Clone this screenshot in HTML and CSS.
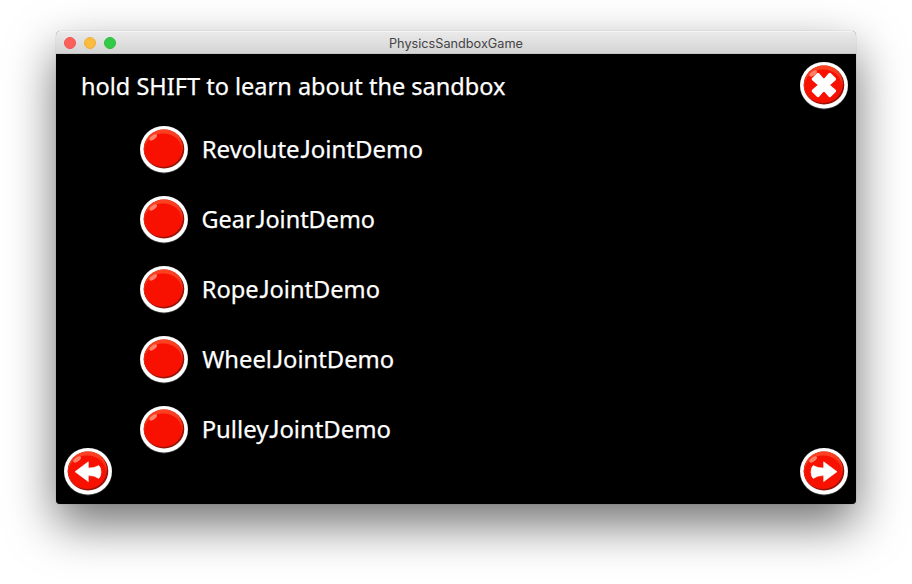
FILE: index.html
```
<!DOCTYPE html>
<html lang="en">
<head>
<meta charset="utf-8">
<title>PhysicsSandboxGame</title>
<link rel="stylesheet" href="styles.css">
</head>
<body>
<svg class="defs" aria-hidden="true">
  <defs>
    <linearGradient id="gloss" x1="0" y1="0" x2="0" y2="1">
      <stop offset="0" stop-color="#ff4524"/>
      <stop offset="1" stop-color="#d81c0c"/>
    </linearGradient>
    <clipPath id="face"><ellipse cx="24" cy="23" rx="20.3" ry="19.6"/></clipPath>
    <symbol id="button" viewBox="0 0 48 48">
      <ellipse cx="24" cy="23.6" rx="24.2" ry="23.8" fill="#8b8b8b" opacity=".5"/>
      <ellipse cx="24" cy="23.3" rx="23.9" ry="23.3" fill="#fff"/>
      <g clip-path="url(#face)">
        <rect width="48" height="48" fill="#9c1008"/>
        <ellipse cx="22.8" cy="21.6" rx="20" ry="19.5" fill="url(#gloss)"/>
        <ellipse cx="23.2" cy="24" rx="18.6" ry="16.6" fill="#f81000"/>
        <ellipse cx="13.2" cy="11.5" rx="4.4" ry="2" transform="rotate(-34 13.2 11.5)" fill="#ff8068"/>
      </g>
    </symbol>
    <path id="arrow" d="M11 23.7 24.3 13.8V20Q30 20.5 34.7 17.6Q36.8 19 37 24Q36.8 28.8 34.7 30.4Q30 27 24.3 27.6V33.6Z" stroke="#fff" stroke-width=".6" stroke-linejoin="round"/>
  </defs>
</svg>
<main class="window">
  <header class="titlebar">
    <div class="lights"><i class="red"></i><i class="yellow"></i><i class="green"></i></div>
    <svg class="title" width="136" height="22"><text x="1" y="16.3" textLength="134" lengthAdjust="spacingAndGlyphs">PhysicsSandboxGame</text></svg>
  </header>
  <section class="game">
    <div class="top">
      <svg class="label hint" width="430" height="48"><text x="0" y="32.6" textLength="424.5" lengthAdjust="spacingAndGlyphs">hold SHIFT to learn about the sandbox</text></svg>
      <svg class="btn" viewBox="0 0 48 48">
        <use href="#button"/>
        <g fill="#fff" stroke="#fff" stroke-width="3" stroke-linejoin="round" transform="translate(23.9 23) rotate(45)">
          <path d="M-3.4-11.8H3.4L2.9-2.9 11.8-3.4V3.4L2.9 2.9 3.4 11.8H-3.4L-2.9 2.9-11.8 3.4V-3.4L-2.9-2.9Z"/>
        </g>
      </svg>
    </div>
    <ul class="demos">
      <li><svg class="btn"><use href="#button"/></svg><svg class="label" width="240" height="48"><text x="0.7" y="31.8" textLength="221.3" lengthAdjust="spacingAndGlyphs">Revolute<tspan class="cap-j" dx="1">J</tspan>ointDemo</text></svg></li>
      <li><svg class="btn"><use href="#button"/></svg><svg class="label" width="240" height="48"><text x="0.5" y="31.8" textLength="173.5" lengthAdjust="spacingAndGlyphs">Gear<tspan class="cap-j" dx="1">J</tspan>ointDemo</text></svg></li>
      <li><svg class="btn"><use href="#button"/></svg><svg class="label" width="240" height="48"><text x="0.7" y="31.8" textLength="178.3" lengthAdjust="spacingAndGlyphs">Rope<tspan class="cap-j" dx="1">J</tspan>ointDemo</text></svg></li>
      <li><svg class="btn"><use href="#button"/></svg><svg class="label" width="240" height="48"><text x="1.2" y="31.8" textLength="192" lengthAdjust="spacingAndGlyphs">Wheel<tspan class="cap-j" dx="1">J</tspan>ointDemo</text></svg></li>
      <li><svg class="btn"><use href="#button"/></svg><svg class="label" width="240" height="48"><text x="0.7" y="31.8" textLength="189.3" lengthAdjust="spacingAndGlyphs">Pulley<tspan class="cap-j" dx="1">J</tspan>ointDemo</text></svg></li>
    </ul>
    <nav class="pager">
      <svg class="btn" viewBox="0 0 48 48"><use href="#button"/><use href="#arrow" fill="#fff"/></svg>
      <svg class="btn" viewBox="0 0 48 48"><use href="#button"/><use href="#arrow" fill="#fff" transform="matrix(-1 0 0 1 48 0)"/></svg>
    </nav>
  </section>
</main>
</body>
</html>
```
FILE: styles.css
```
* { box-sizing: border-box; }
body {
  margin: 0;
  height: 584px;
  padding: 31px 56px 0;
  background: #fff;
  overflow: hidden;
}
.defs { position: absolute; width: 0; height: 0; }
.window {
  width: 800px;
  height: 473px;
  border-radius: 5px 5px 4px 4px;
  background: #000;
  box-shadow: 0 0 1px rgba(0, 0, 0, .4), 0 20px 48px rgba(0, 0, 0, .56);
}
.titlebar {
  display: grid;
  grid-template-columns: 1fr 136px 1fr;
  align-items: center;
  height: 23px;
  border-radius: 5px 5px 0 0;
  background: linear-gradient(#ebebeb, #d3d3d3);
  box-shadow: inset 0 1px #f5f5f5, inset 0 -1px #c4c4c4;
}
.lights { display: flex; gap: 8px; padding-left: 8px; }
.lights i { width: 12px; height: 12px; border-radius: 50%; }
.red { background: #fc605b; border: 1px solid #ee5550; }
.yellow { background: #fdbc40; border: 1px solid #edaf3a; }
.green { background: #33c949; border: 1px solid #2cbd3e; }
.title {
  display: block;
  font: 12.5px Inter, sans-serif;
  fill: #444;
}
.game { display: flex; flex-direction: column; height: 450px; padding: 8px; }
.btn { display: block; flex: none; width: 48px; height: 48px; overflow: visible; }
.label {
  display: block;
  font: 24.3px "Noto Sans", sans-serif;
  fill: #fff;
  stroke: #fff;
  stroke-width: .25px;
  overflow: visible;
}
.cap-j { font-family: Lato, sans-serif; }
.top { display: flex; justify-content: space-between; }
.hint { margin-left: 17px; }
.demos {
  display: flex;
  flex-direction: column;
  gap: 22px;
  margin: 16px 0 0 76px;
  padding: 0;
  list-style: none;
}
.demos li { display: flex; gap: 13px; height: 48px; }
.pager { display: flex; justify-content: space-between; margin-top: -6px; }
```
